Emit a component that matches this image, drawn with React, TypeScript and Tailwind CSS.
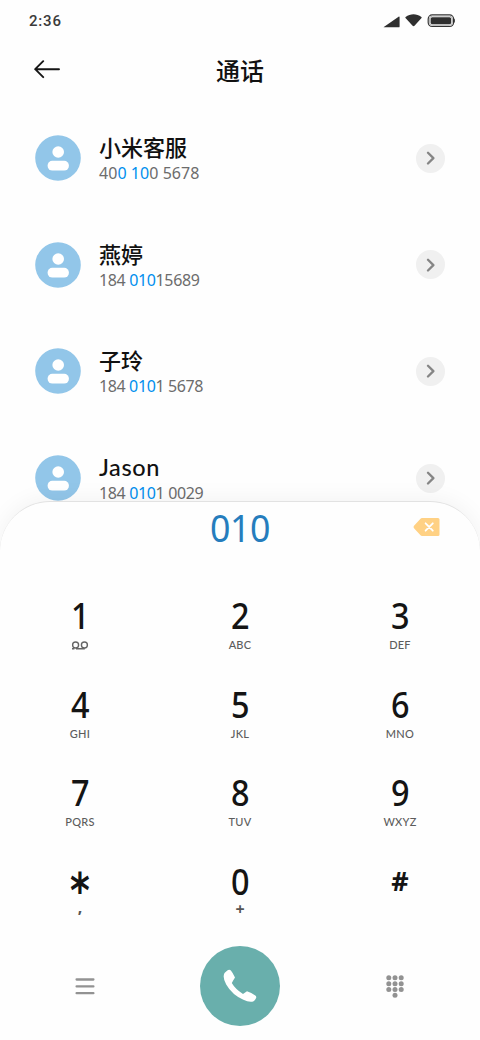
const contacts = [
  { name: '小米客服', number: ['40', '0 10', '0 5678'], tracking: 'tracking-[0.05px]' },
  { name: '燕婷', number: ['184 ', '010', '15689'], tracking: 'tracking-[-0.36px]' },
  { name: '子玲', number: ['184 ', '010', '1 5678'], tracking: 'tracking-[-0.38px]' },
  { name: 'Jason', number: ['184 ', '010', '1 0029'], tracking: 'tracking-[-0.36px]' },
];

const keys = [
  ['1', ''], ['2', 'ABC'], ['3', 'DEF'],
  ['4', 'GHI'], ['5', 'JKL'], ['6', 'MNO'],
  ['7', 'PQRS'], ['8', 'TUV'], ['9', 'WXYZ'],
  ['*', ','], ['0', '+'], ['#', ''],
];

function StatusBar() {
  return (
    <div className="flex h-[42px] items-center justify-between pl-[29px] pr-[24px]">
      <span className="font-['Roboto',sans-serif] text-[15px] leading-[18px] font-medium tracking-[0.8px] text-[#3a3a3a]">2:36</span>
      <svg width="73" height="16" viewBox="383 13 73 16" fill="#2f2f2f">
        <path d="M383.8 26.9 398.6 16.7c.6-.4 1-.2 1 .5v9.2c0 .6-.3.9-.9.9h-14.6c-.6 0-.8-.2-.3-.4z" />
        <path d="M405.6 17c4.8-3.8 11-3.8 15.8 0 .4.3.4.8.1 1.1l-7 7.6c-.6.6-1.3.6-1.9 0l-7.1-7.6c-.3-.3-.3-.8.1-1.1z" />
        <rect x="428.2" y="14.9" width="25.4" height="11.6" rx="4" fill="#fff" stroke="#333" strokeWidth="1.2" />
        <rect x="429.4" y="16.1" width="23" height="9.2" rx="3" fill="none" stroke="#999" strokeWidth=".8" />
        <rect x="430.6" y="17.2" width="20.6" height="7" rx="1.6" />
        <path d="M454 18.5c1.2.4 1.2 4 0 4.4z" />
      </svg>
    </div>
  );
}

function Contact({ name, number, tracking }: (typeof contacts)[number]) {
  const latin = name === 'Jason';
  return (
    <div className="flex h-[106.7px] items-start pl-[35px] pr-[35.5px]">
      <svg className="mt-[1px] shrink-0" width="46" height="46" viewBox="0 0 46 46">
        <circle cx="23" cy="23" r="22.8" fill="#92c6e9" />
        <circle cx="23.2" cy="17" r="5.8" fill="#fff" />
        <rect x="12.6" y="25.8" width="21.3" height="9.8" rx="4.7" fill="#fff" />
      </svg>
      <div className="ml-[18px] flex-1">
        <div className={latin
          ? "-mt-[1px] h-[29px] font-['Lato',sans-serif] text-[23.5px] leading-[28px] font-medium tracking-[0.6px] text-[#111]"
          : "-mt-[1px] h-[29px] font-['Noto_Sans_CJK_SC',sans-serif] text-[22px] leading-[26px] font-medium text-[#111]"}>{name}</div>
        <div className={`h-[22px] font-['Noto_Sans',sans-serif] text-[16px] leading-[22px] font-normal whitespace-pre text-[#6c6c6c] ${tracking}`}>
          {number[0]}<span className="text-[#008fee]">{number[1]}</span>{number[2]}
        </div>
      </div>
      <div className="mt-[9.5px] flex size-[29px] items-center justify-center rounded-full bg-[#f0f0f0]">
        <svg width="9" height="14" viewBox="0 0 9 14" fill="none" stroke="#858585" strokeWidth="2.3" strokeLinecap="round" strokeLinejoin="round">
          <path d="m2 1.7 5.4 5.4L2 12.5" />
        </svg>
      </div>
    </div>
  );
}

function Key({ main, sub }: { main: string; sub: string }) {
  return (
    <div className="flex h-[88.7px] flex-col items-center">
      {main === '*' ? (
        <span className="mr-px h-[40px] scale-x-90 scale-y-115 pt-[8px] font-['DejaVu_Sans',sans-serif] text-[42px] leading-[44px] font-bold text-[#141414]">*</span>
      ) : main === '#' ? (
        <span className="h-[44px] font-['Noto_Sans',sans-serif] text-[27px] leading-[44px] font-bold text-[#141414]">#</span>
      ) : (
        <span className={`scale-x-90 font-['Noto_Sans',sans-serif] text-[36px] leading-[46px] font-medium text-[#141414] ${main === '0' ? 'h-[42px]' : 'h-[44px]'}`}>{main}</span>
      )}
      {main === '1' ? (
        <svg className="mt-[4px]" width="18" height="9" viewBox="0 0 18 9" fill="none" stroke="#666" strokeWidth="1.4">
          <circle cx="4.6" cy="4" r="3" />
          <circle cx="13.4" cy="4" r="3" />
          <path d="M1 7.8h2.4M5 7.8h8.8" />
        </svg>
      ) : (
        <span className={sub.length === 1
          ? "font-['Noto_Sans',sans-serif] text-[16px] leading-[16px] font-bold text-[#555]"
          : "font-['Lato',sans-serif] text-[11px] leading-[16px] font-medium tracking-[0.25px] text-[#5c5c5c]"}>{sub}</span>
      )}
    </div>
  );
}

export default function App() {
  return (
    <main className="flex h-[1040px] w-[480px] flex-col overflow-hidden bg-[#fefefe]">
      <StatusBar />
      <header className="grid h-[92px] shrink-0 grid-cols-3 items-start px-[34px] pt-[12px]">
        <svg className="mt-[6px]" width="27" height="19" viewBox="0 0 27 19" fill="none" stroke="#151515" strokeWidth="1.9" strokeLinecap="round" strokeLinejoin="round">
          <path d="M25 9.2H1.2M9.2 1.2l-8 8 8 8" />
        </svg>
        <h1 className="text-center font-['Noto_Sans_CJK_SC',sans-serif] text-[24px] leading-[31px] font-medium text-[#111]">通话</h1>
      </header>
      <div className="h-[367px] shrink-0">
        {contacts.map((c) => <Contact key={c.name} {...c} />)}
      </div>
      <section className="relative flex h-[539px] shrink-0 flex-col rounded-t-[50px] border-t border-[#e2e2e2] bg-[#fefefe] shadow-[0_-2px_22px_rgba(0,0,0,0.05)]">
        <div className="grid h-[91px] grid-cols-3 items-start">
          <span className="col-start-2 scale-x-94 pt-[1px] text-center font-['Noto_Sans',sans-serif] text-[38px] leading-[48px] tracking-[-0.4px] text-[#267dbd]">010</span>
          <svg className="mt-[15px] mr-[40px] justify-self-end" width="27" height="20" viewBox="0 0 27 20">
            <path d="M9 1h16q1.5 0 1.5 1.5v15q0 1.5-1.5 1.5H9q-.9 0-1.5-.7L1 11.2q-1-1.2 0-2.4l6.5-7.1Q8.1 1 9 1z" fill="#ffd184" />
            <path d="m12.6 6.3 7.2 7.4m0-7.4-7.2 7.4" stroke="#fff" strokeWidth="1.8" strokeLinecap="round" />
          </svg>
        </div>
        <div className="grid h-[353px] grid-cols-3">
          {keys.map(([main, sub]) => <Key key={main} main={main} sub={sub} />)}
        </div>
        <div className="flex h-[80px] items-center justify-between px-[75px]">
          <svg width="20" height="18" viewBox="0 0 20 18" stroke="#929292" strokeWidth="2.3" strokeLinecap="round">
            <path d="M1.6 2.5h16.8M1.6 9.4h16.8M1.6 16.2h16.8" />
          </svg>
          <div className="flex size-[80px] items-center justify-center rounded-full bg-[#69afac]">
            <svg width="34" height="34" viewBox="0 0 34 34" fill="#fff">
              <path d="M1.5 3.9 4.3 1.4Q6.3.2 7.9 1.4q2 2.4 4.1 7.1-1.8 2.8-3.2 5.5 3.4 6 11.2 11 2.3-1.7 4-2.8 4.3 1.4 8.3 4.2 1.5 1.2.7 2.8-1.1 2.1-2.8 3.4-4.6 1-9.8-1.9Q9.2 25.8 3.2 15.4-.8 8.5 1.5 3.9z" />
            </svg>
          </div>
          <svg width="20" height="24" viewBox="0 0 20 24" fill="#929292">
            {[3.7, 9.7, 15.4].map((y) => [3.8, 10, 16.2].map((x) => <circle key={`${x}-${y}`} cx={x} cy={y} r="2.5" />))}
            <circle cx="10" cy="21.3" r="2.5" />
          </svg>
        </div>
      </section>
    </main>
  );
}
